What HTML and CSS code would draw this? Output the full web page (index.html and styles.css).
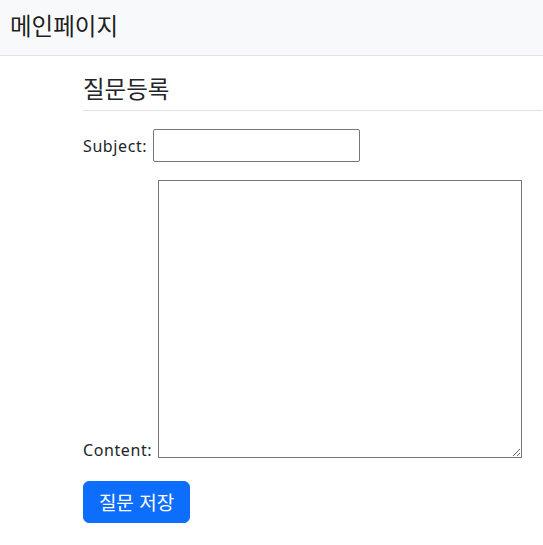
FILE: index.html
```html
<!DOCTYPE html>
<html lang="ko">
<head>
<meta charset="utf-8">
<title>질문등록</title>
<link rel="stylesheet" href="styles.css">
</head>
<body>
<nav class="navbar">
  <a class="brand" href="#">메인페이지</a>
</nav>
<main class="container">
  <h5 class="title">질문등록</h5>
  <form class="form">
    <div class="row row-subject">
      <label class="label" for="subject">Subject:</label>
      <input class="input" type="text" id="subject" name="subject">
    </div>
    <div class="row row-content">
      <label class="label label-content" for="content">Content:</label>
      <textarea class="textarea" id="content" name="content"></textarea>
    </div>
    <button class="btn" type="button">질문 저장</button>
  </form>
</main>
</body>
</html>
```
FILE: styles.css
```css
html, body {
  margin: 0;
  padding: 0;
  background: #fff;
}
body {
  font-family: "Noto Sans", "Noto Sans CJK KR", sans-serif;
  color: #212529;
}
.navbar {
  height: 55px;
  box-sizing: content-box;
  background: #f8f9fa;
  border-bottom: 1px solid #dee2e6;
  display: flex;
  align-items: center;
  padding-left: 10px;
}
.brand {
  font-family: "Noto Sans CJK KR", sans-serif;
  font-size: 23.5px;
  line-height: 28px;
  color: rgba(0, 0, 0, 0.9);
  text-decoration: none;
  margin-top: -6px;
}
.container {
  padding: 0 1px 0 83px;
}
.title {
  font-family: "Noto Sans CJK KR", sans-serif;
  font-size: 23.5px;
  font-weight: 400;
  line-height: 28px;
  margin: 18px 0 0;
  padding-bottom: 8px;
  border-bottom: 1px solid #dee2e6;
}
.form {
  display: flex;
  flex-direction: column;
  align-items: flex-start;
}
.row {
  display: flex;
  gap: 6px;
}
.row-subject {
  margin-top: 18px;
  align-items: center;
}
.row-content {
  margin-top: 18px;
  align-items: flex-end;
}
.label {
  font-size: 16px;
  letter-spacing: 0.6px;
  line-height: 24px;
  color: #212529;
}
.label-content {
  line-height: 16px;
}
.input {
  box-sizing: border-box;
  width: 207px;
  height: 33px;
  border: 1px solid #767676;
  border-radius: 2px;
  margin: 0;
  padding: 1px 2px;
  font-size: 16px;
}
.textarea {
  box-sizing: border-box;
  width: 364px;
  height: 278px;
  border: 1px solid #767676;
  border-radius: 0;
  margin: 0;
  padding: 2px;
  font-size: 16px;
}
.btn {
  margin-top: 23px;
  width: 107px;
  height: 42px;
  border: 1px solid #0d6efd;
  background: #0d6efd;
  color: #fff;
  border-radius: 6px;
  font-family: "Noto Sans CJK KR", sans-serif;
  font-size: 19px;
  line-height: 24px;
  padding: 0;
  cursor: pointer;
}
```
